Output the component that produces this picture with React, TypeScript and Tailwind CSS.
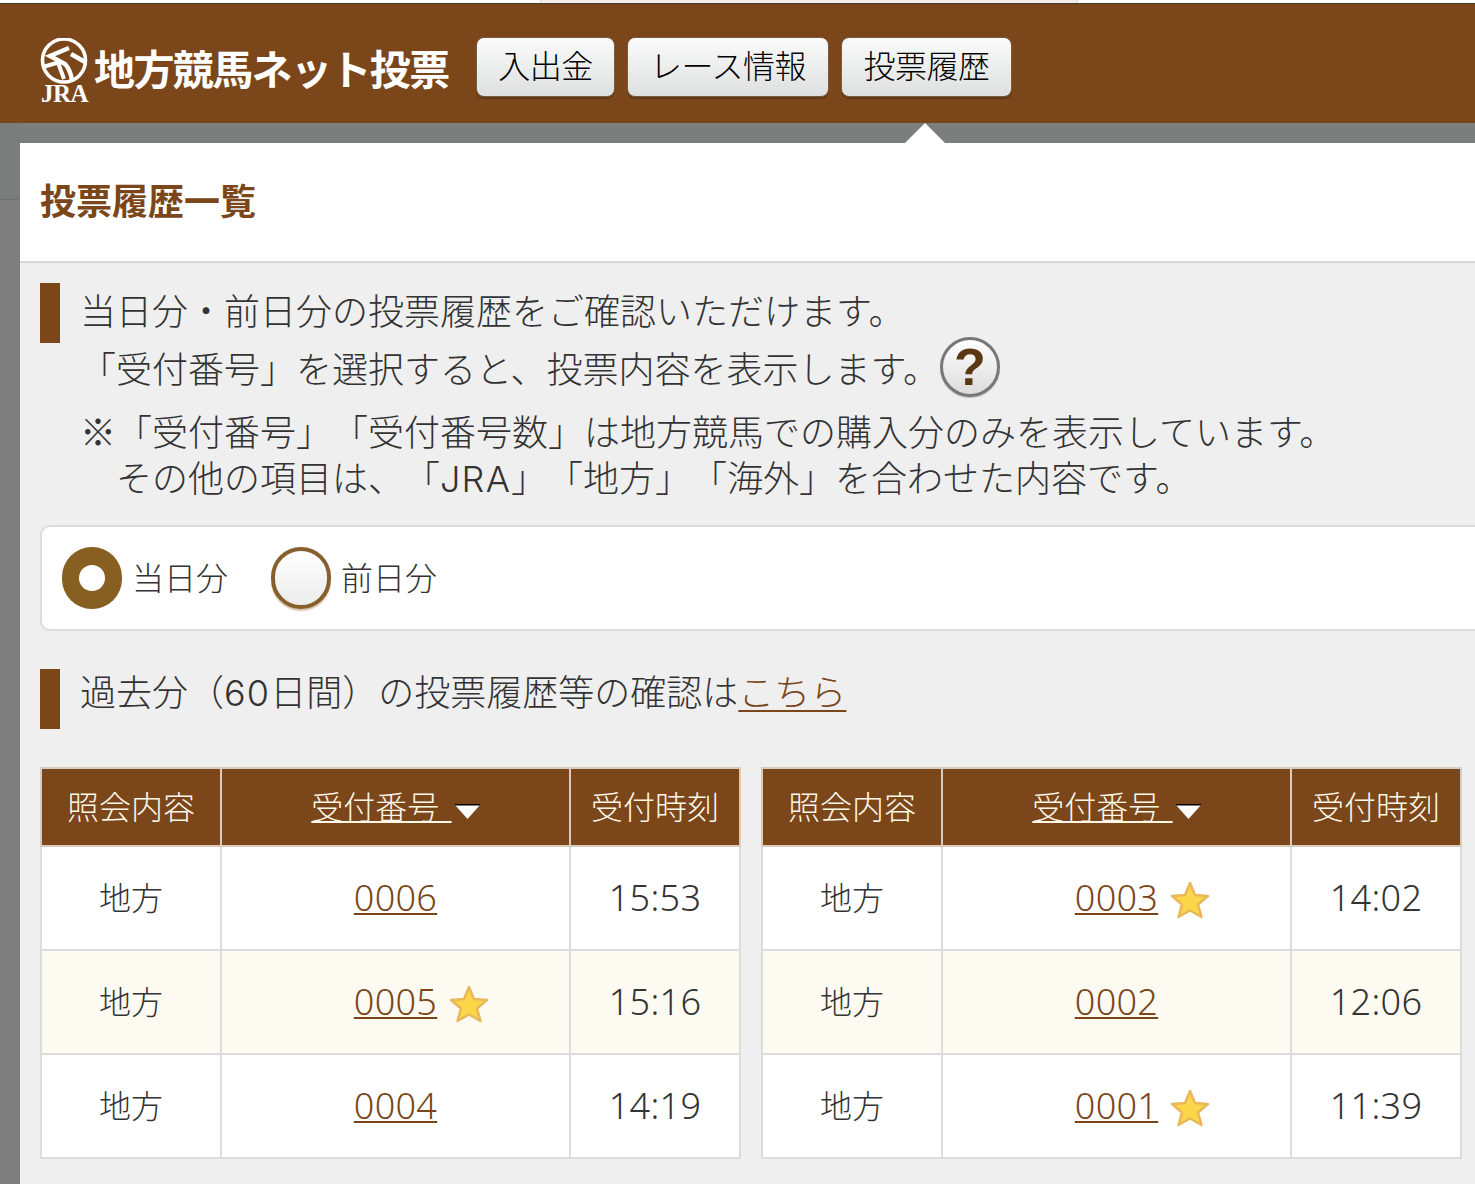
const jp = "font-['Noto_Sans','Noto_Sans_CJK_JP',sans-serif] [text-spacing-trim:space-all]";
const latin = "font-['Inter',sans-serif] tracking-[1.200px]";

function Logo() {
  return (
    <div className="relative w-[50px] h-[66px] shrink-0 mt-[1px]">
      <svg viewBox="0 0 50 48" className="w-[50px] h-[48px] block">
        <circle cx="25" cy="22.500" r="21.500" fill="none" stroke="#fff" strokeWidth="3.600" />
        <path d="M30 10 L11 18 L26 26 Q31 31 33 42" fill="none" stroke="#fff" strokeWidth="4.500" />
        <path d="M32 16 L46 24" fill="none" stroke="#fff" strokeWidth="4.500" />
        <path d="M4 29 L19 24.500 L25 41" fill="none" stroke="#fff" strokeWidth="4" />
      </svg>
      <div className="absolute left-[2px] top-[44px] text-white text-[25px] leading-[24px] font-bold tracking-[-0.5px] font-['Liberation_Serif',serif]">JRA</div>
    </div>
  );
}

function NavButton({ label, width }: { label: string; width: string }) {
  return (
    <div className={`${width} h-[60px] pb-[2px] flex items-center justify-center rounded-[8px] bg-gradient-to-b from-[#fbfbfb] to-[#dedfdf] border border-[#7c5a3c] shadow-[0_2px_0_#5e3a18] text-[32px] font-light text-black leading-none tracking-[-0.5px]`}>
      {label}
    </div>
  );
}

function Bar() {
  return <div className="w-[20px] h-[60px] bg-[#7a461a] shrink-0" />;
}

function Star() {
  return (
    <svg viewBox="0 0 40 40" className="absolute left-[95px] top-[4px] w-[40px] h-[40px]">
      <path d="M20 3 L25 15 L38 16 L28 24.500 L31.500 37 L20 30.500 L8.500 37 L12 24.500 L2 16 L15 15 Z" fill="#fad648" stroke="#e8b85a" strokeWidth="2.500" strokeLinejoin="round" />
    </svg>
  );
}

function Radio({ on, label }: { on: boolean; label: string }) {
  return (
    <div className="flex items-center">
      {on ? (
        <div className="w-[60px] h-[62px] rounded-full bg-[#875f20] flex items-center justify-center">
          <div className="w-[26px] h-[26px] rounded-full bg-white" />
        </div>
      ) : (
        <div className="w-[60px] h-[62px] rounded-full border-[4px] border-[#875f2c] bg-gradient-to-b from-white to-[#ececec] shadow-[0_2px_1px_#d8c8b0]" />
      )}
      <span className="ml-[10px] text-[32px] leading-none font-light text-[#333]">{label}</span>
    </div>
  );
}

type Row = { no: string; time: string; star?: boolean };

function HistoryTable({ rows }: { rows: Row[] }) {
  const th = "border-2 border-[#d9cbbd] bg-[#7a461a] text-[#fdf8e8] text-[32px] font-light h-[78px] p-0 text-center";
  const td = "border-2 border-[#dcdcdc] text-center p-0 h-[104px] text-[#333] font-light";
  return (
    <table className="w-[699px] border-collapse table-fixed shrink-0">
      <colgroup>
        <col className="w-[180px]" />
        <col className="w-[349px]" />
        <col className="w-[170px]" />
      </colgroup>
      <thead>
        <tr>
          <th className={th}>照会内容</th>
          <th className={th}>
            <span className="inline-flex items-center">
              <span className="underline underline-offset-[2px] decoration-2 whitespace-pre [word-spacing:4px]">受付番号 </span>
              <svg viewBox="0 0 25 15" className="w-[25px] h-[15px] ml-[3px] mt-[8px]">
                <polygon points="0,1 25,1 12.500,15" fill="#fff" />
                <rect x="0" y="0" width="25" height="1.500" fill="#000" />
              </svg>
            </span>
          </th>
          <th className={th}>受付時刻</th>
        </tr>
      </thead>
      <tbody>
        {rows.map((r, i) => (
          <tr key={r.no} className={i === 1 ? "bg-[#fcfaf1]" : "bg-white"}>
            <td className={`${td} text-[32px]`}>地方</td>
            <td className={td}>
              <span className="relative inline-block text-[36px] leading-[44px] text-[#7a461a] underline underline-offset-[2px] decoration-2 tracking-[0.3px]">
                {r.no}
                {r.star && <Star />}
              </span>
            </td>
            <td className={`${td} text-[36px] tracking-[0.3px]`}>{r.time}</td>
          </tr>
        ))}
      </tbody>
    </table>
  );
}

export default function App() {
  return (
    <div className={`w-[1475px] h-[1184px] overflow-hidden flex flex-col bg-[#efefef] ${jp}`}>
      <div className="h-[4px] shrink-0 flex bg-white border-b border-[#4a3a2a]">
        <div className="w-[540px]" />
        <div className="w-[538px] bg-[#f3efe8] border-x border-[#d8d4cc]" />
      </div>

      <header className="h-[119px] shrink-0 bg-[#7a461a] flex items-start pl-[39px] pt-[33px]">
        <Logo />
        <div className="w-[382px] ml-[5px] mt-[7px] shrink-0 text-white font-bold text-[41px] leading-[50px] tracking-[-1.600px] whitespace-nowrap">地方競馬ネット投票</div>
        <div className="flex gap-[12px]">
          <NavButton label="入出金" width="w-[139px]" />
          <NavButton label="レース情報" width="w-[202px]" />
          <NavButton label="投票履歴" width="w-[171px]" />
        </div>
      </header>

      <div className="relative flex-1 flex bg-[#7c7e7d]">
        <div className="w-[20px] shrink-0 h-full">
          <div className="h-[77px] bg-[#7b7d7c] border-b border-[#707272]" />
          <div className="h-full bg-[#7f7f7f]" />
        </div>

        <div className="absolute left-[905px] top-0 w-0 h-0 border-x-[20px] border-x-transparent border-b-[20px] border-b-white" />

        <main className="flex-1 mt-[20px] flex flex-col min-w-0">
          <div className="h-[120px] shrink-0 bg-white border-b-2 border-[#d8d8d8] flex items-center pl-[20px]">
            <h1 className="text-[36px] leading-none font-bold text-[#7a461a]">投票履歴一覧</h1>
          </div>

          <div className="flex-1 bg-[#efefef] pl-[20px] pt-[20px]">
            <div className="flex text-[36px] text-[#333] font-light">
              <Bar />
              <div className="ml-[20px] whitespace-nowrap">
                <p className="h-[58px] leading-[58px]">当日分・前日分の投票履歴をご確認いただけます。</p>
                <p className="h-[60px] leading-[58px] flex items-start">
                  「受付番号」を選択すると、投票内容を表示します。
                  <span className="w-[60px] h-[60px] ml-[1px] mt-[-4px] rounded-full border-[3px] border-[#777] bg-gradient-to-b from-white to-[#dcdcdc] flex items-center justify-center text-[52px] leading-none font-bold font-['Liberation_Sans',sans-serif] text-[#5b3713] shadow-[0_1px_1px_#bbb]">?</span>
                </p>
                <p className="h-[48px] leading-[50px] mt-[4px]"><span className="font-['Noto_Sans_CJK_JP',sans-serif]">※</span>「受付番号」「受付番号数」は地方競馬での購入分のみを表示しています。</p>
                <p className="h-[48px] leading-[52px] pl-[36px]">その他の項目は、「<span className={latin}>JRA</span>」「地方」「海外」を合わせた内容です。</p>
              </div>
            </div>

            <div className="mt-[24px] h-[106px] mr-[-20px] bg-white border-2 border-[#dcdcdc] rounded-[10px] flex items-center pl-[20px] gap-[43px]">
              <Radio on label="当日分" />
              <Radio on={false} label="前日分" />
            </div>

            <div className="mt-[38px] flex items-center text-[36px] text-[#333] font-light whitespace-nowrap">
              <Bar />
              <p className="ml-[20px] leading-[50px] -mt-[12px]">
                過去分（<span className={latin}>60</span>日間）の投票履歴等の確認は
                <span className="text-[#7a461a] underline underline-offset-[4px] decoration-2">こちら</span>
              </p>
            </div>

            <div className="mt-[38px] flex gap-[20px]">
              <HistoryTable
                rows={[
                  { no: "0006", time: "15:53" },
                  { no: "0005", time: "15:16", star: true },
                  { no: "0004", time: "14:19" },
                ]}
              />
              <HistoryTable
                rows={[
                  { no: "0003", time: "14:02", star: true },
                  { no: "0002", time: "12:06" },
                  { no: "0001", time: "11:39", star: true },
                ]}
              />
            </div>
          </div>
        </main>
      </div>
    </div>
  );
}
